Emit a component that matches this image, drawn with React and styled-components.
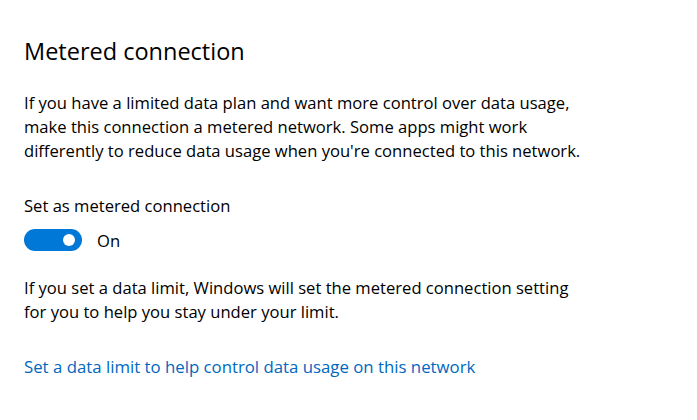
import React from "react";
import styled, { createGlobalStyle } from "styled-components";

const Global = createGlobalStyle`
  html, body { margin: 0; padding: 0; background: #ffffff; }
  body { font-family: "Segoe UI", "Open Sans", "Noto Sans", sans-serif; color: #000; }
`;

const Page = styled.div`
  width: 697px;
  height: 420px;
  box-sizing: border-box;
  padding: 36px 24px 0 24px;
  background: #fff;
  display: flex;
  flex-direction: column;
`;

const Title = styled.h2`
  margin: 0;
  font-size: 23.5px;
  font-weight: 400;
  line-height: 30px;
  color: #000;
`;

const Text = styled.p`
  margin: ${(p) => p.$mt || 0}px 0 0 0;
  font-size: 16.6px;
  line-height: 24px;
  color: #000;
  white-space: nowrap;
`;

const ToggleRow = styled.div`
  display: flex;
  align-items: center;
  gap: 15px;
  margin-top: 10px;
  height: 24px;
`;

const Toggle = styled.div`
  width: 58px;
  height: 22px;
  border-radius: 11px;
  background: #0078d7;
  position: relative;
  box-sizing: border-box;
`;

const Knob = styled.span`
  position: absolute;
  right: 7px;
  top: 5px;
  width: 12px;
  height: 12px;
  border-radius: 50%;
  background: #fff;
`;

const State = styled.span`
  font-size: 16.6px;
  color: #000;
`;

const Link = styled.a`
  margin-top: 31px;
  font-size: 16.8px;
  line-height: 24px;
  color: #0067c0;
  text-decoration: none;
  cursor: pointer;
`;

export default function App() {
  return (
    <>
      <Global />
      <Page>
        <Title>Metered connection</Title>
        <Text $mt={25}>
          If you have a limited data plan and want more control over data usage,
          <br />
          make this connection a metered network. Some apps might work
          <br />
          differently to reduce data usage when you're connected to this network.
        </Text>
        <Text $mt={31}>Set as metered connection</Text>
        <ToggleRow>
          <Toggle>
            <Knob />
          </Toggle>
          <State>On</State>
        </ToggleRow>
        <Text $mt={24}>
          If you set a data limit, Windows will set the metered connection setting
          <br />
          for you to help you stay under your limit.
        </Text>
        <Link>Set a data limit to help control data usage on this network</Link>
      </Page>
    </>
  );
}
